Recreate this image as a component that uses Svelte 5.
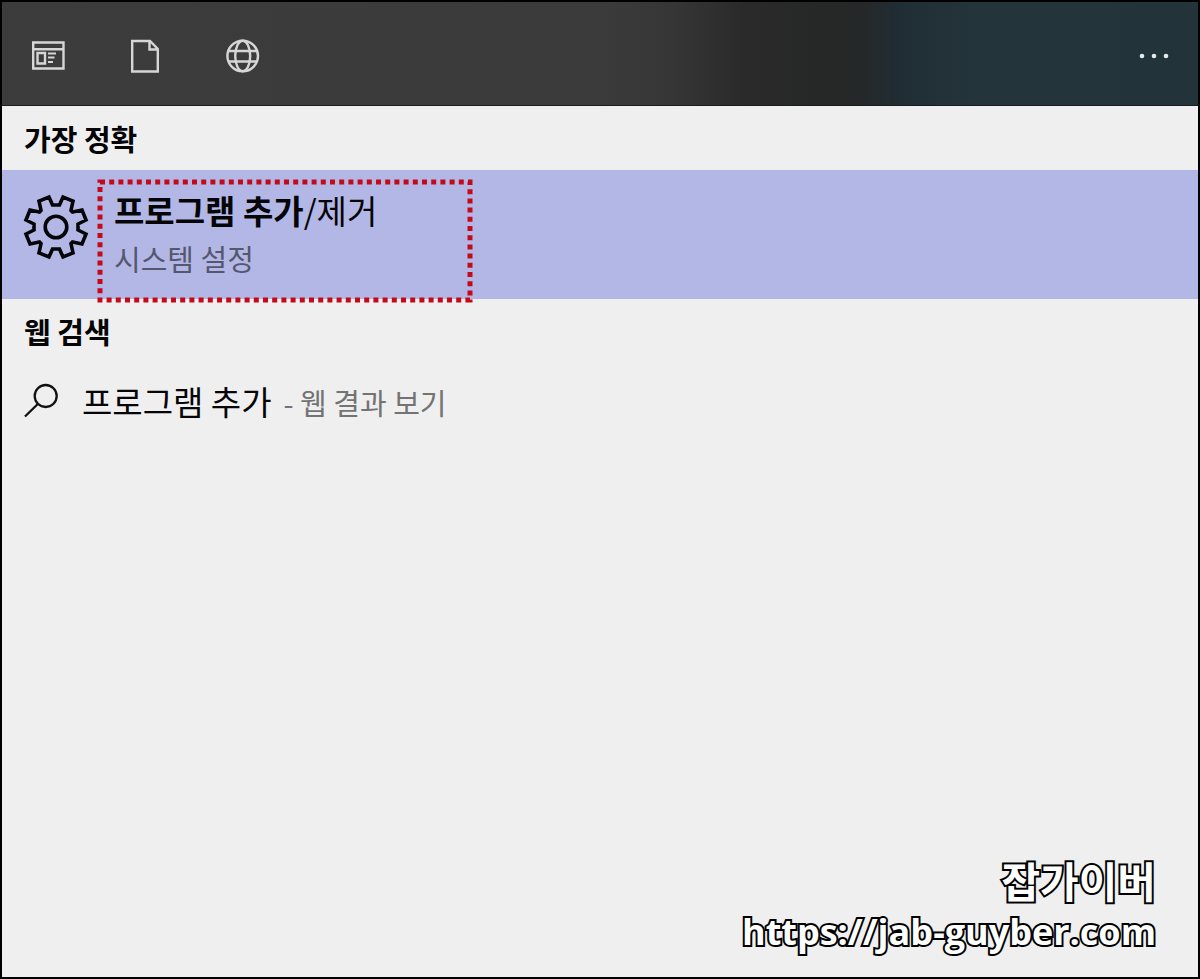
<script>
  const query = '프로그램 추가';
</script>

<main class="panel">
  <header class="toolbar">
    <nav class="filters" aria-label="필터">
      <button type="button" class="icon-button" aria-label="앱">
        <svg width="36" height="36" viewBox="0 0 36 36" fill="none" stroke="#d6d6d6" stroke-width="2.400">
          <path d="M3.200 4.500H33.500V30.500H3.200Z M3.200 11.300H33.500" />
          <path d="M7.500 15H15V25.500H7.500Z" />
          <path d="M18 15.500H26 M18 19.500H24.500 M18 24H23" stroke-width="2" />
        </svg>
      </button>
      <button type="button" class="icon-button" aria-label="문서">
        <svg width="36" height="36" viewBox="0 0 36 36" fill="none" stroke="#d6d6d6" stroke-width="2.400">
          <path d="M5.200 3H23L30.800 11V33.500H5.200Z M22.500 3V11.500H30.800" />
        </svg>
      </button>
      <button type="button" class="icon-button" aria-label="웹">
        <svg width="36" height="36" viewBox="0 0 36 36" fill="none" stroke="#d6d6d6" stroke-width="2.400">
          <circle cx="18.700" cy="18" r="15.300" />
          <ellipse cx="18.700" cy="18" rx="7.500" ry="15.300" />
          <path d="M4.500 13H33 M4.500 23.500H33" />
        </svg>
      </button>
    </nav>
    <button type="button" class="icon-button" aria-label="더 보기">
      <svg width="36" height="36" viewBox="0 0 36 36" fill="#e4eaec">
        <circle cx="6" cy="18" r="2.300" /><circle cx="18" cy="18" r="2.300" /><circle cx="30" cy="18" r="2.300" />
      </svg>
    </button>
  </header>

  <h2>가장 정확</h2>
  <a class="best" href="#settings">
    <svg width="68" height="68" viewBox="-34 -34 68 68" fill="none" stroke="#050508" stroke-width="3.600">
      <circle r="10.800" />
      <path d="M-3.500 -22H3.500L7 -30L17 -26L15 -16.500L16.500 -15L26 -17L30 -7L22 -3V3L30 7L26 17L16.500 15L15 16.500L17 26L7 30L3.500 22H-3.500L-7 30L-17 26L-15 16.500L-16.500 15L-26 17L-30 7L-22 3V-3L-30 -7L-26 -17L-16.500 -15L-15 -16.500L-17 -26L-7 -30Z" />
    </svg>
    <span class="marked">
      <svg class="dots" width="100%" height="100%" aria-hidden="true">
        <rect width="100%" height="100%" fill="none" stroke="#c40a18" stroke-width="5" stroke-dasharray="5 4.200" />
      </svg>
      <span class="title"><b>{query}</b>/제거</span>
      <span class="sub">시스템 설정</span>
    </span>
  </a>

  <h2>웹 검색</h2>
  <a class="web" href="#web">
    <svg width="36" height="36" viewBox="0 0 36 36" fill="none" stroke="#111" stroke-width="2.300">
      <circle cx="21.700" cy="13" r="11" />
      <path d="M13.800 21L1 33.500" />
    </svg>
    <span class="line">
      <span class="title">{query}</span>
      <span class="hint">- 웹 결과 보기</span>
    </span>
  </a>

  <footer>
    <span class="name">잡가이버</span>
    <a class="url" href="https://jab-guyber.com">https://jab-guyber.com</a>
  </footer>
</main>

<style>
  :global(body) { margin: 0; }
  .panel {
    box-sizing: border-box;
    min-height: 100vh;
    display: flex;
    flex-direction: column;
    border: 2px solid #000;
    background: #efefef;
    color: #050508;
    font-family: "Noto Sans CJK KR", sans-serif;
  }
  a { color: inherit; text-decoration: none; }
  svg { display: block; flex: none; }
  .toolbar {
    display: flex;
    justify-content: space-between;
    align-items: center;
    box-sizing: border-box;
    height: 104px;
    padding: 4px 26px 0 28px;
    border-bottom: 1px solid #191b1c;
    background: linear-gradient(90deg, #3c3c3c 0, #3b3b3b 50%, #363636 56%, #2a2a2a 62%, #262727 69%, #252829 72%, #202d34 75%, #24343b 81%, #22343a 100%);
  }
  .filters { display: flex; gap: 61px; }
  .icon-button { padding: 0; border: 0; background: none; }
  h2 {
    margin: 0;
    padding: 0 22px;
    font-size: 29px;
    line-height: 64px;
    font-weight: 700;
  }
  .best {
    display: flex;
    align-items: flex-start;
    gap: 10px;
    box-sizing: border-box;
    height: 129px;
    padding: 12px 20px 0;
    background: #b3b7e5;
  }
  .best > svg { margin-top: 11px; }
  .marked {
    position: relative;
    display: flex;
    flex-direction: column;
    box-sizing: border-box;
    width: 370px;
    height: 118px;
    padding: 0 14px;
  }
  .dots { position: absolute; inset: 0; overflow: visible; }
  .title { font-size: 33px; line-height: 56px; }
  .title b { font-weight: 700; }
  .sub { font-size: 29px; line-height: 40px; color: #55576f; }
  .web {
    display: flex;
    align-items: center;
    gap: 22px;
    padding: 10px 22px;
  }
  .line { display: flex; align-items: baseline; gap: 12px; }
  .hint { font-size: 29px; color: #737373; }
  footer {
    display: flex;
    flex-direction: column;
    align-items: flex-end;
    margin-top: auto;
    padding: 0 42px 19px;
    color: #fff;
    font-weight: 700;
    line-height: 52px;
    -webkit-text-stroke: 4px #000;
    paint-order: stroke fill;
  }
  .name { font-size: 42px; }
  .url { font-family: "Open Sans", "Noto Sans", sans-serif; font-size: 36px; }
</style>
